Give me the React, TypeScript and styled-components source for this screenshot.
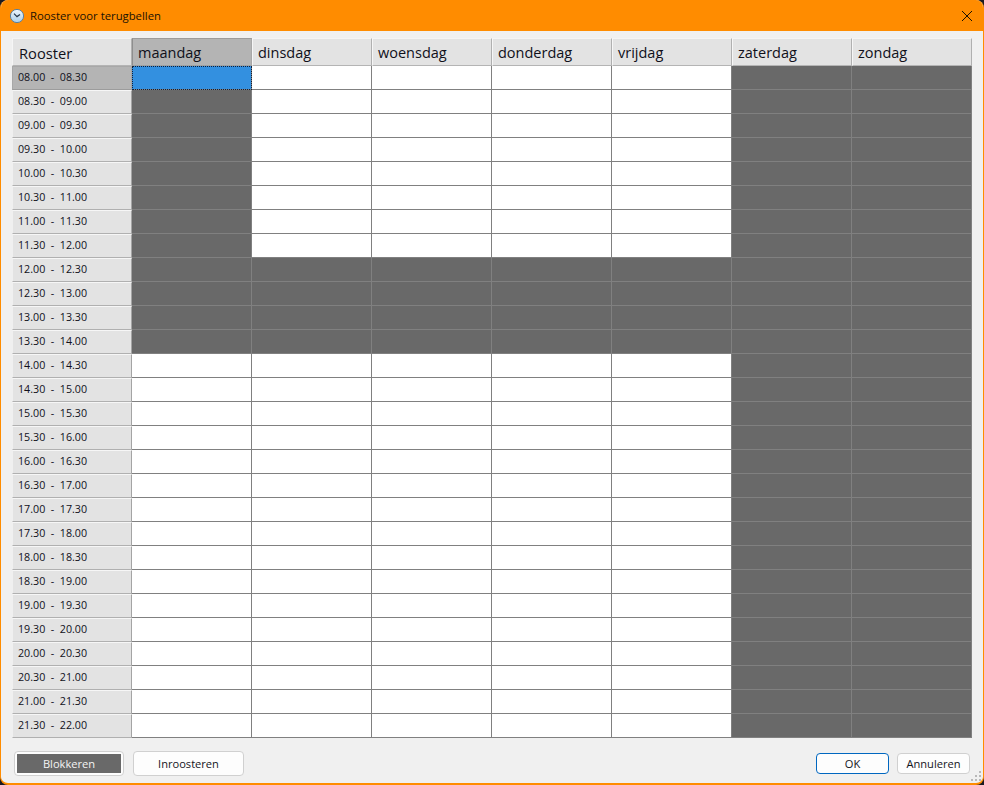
import React from 'react';
import styled, { createGlobalStyle } from "styled-components";

const GlobalStyle = createGlobalStyle`
    html, body {
        margin: 0;
        padding: 0;
        background: #1a1a22;
    }
    body {
        width: 984px;
        height: 785px;
        overflow: hidden;
        font-family: "Open Sans", "Noto Sans", sans-serif;
    }
`;

const Window = styled.div`
    position: relative;
    box-sizing: border-box;
    width: 984px;
    height: 785px;
    display: flex;
    flex-direction: column;
    background: #f0f0f0;
    border: solid 1px #ff8c00;
    border-top: none;
    border-bottom-width: 2px;
    border-radius: 8px;
    overflow: hidden;
`;

const TitleBar = styled.div`
    flex: none;
    height: 31px;
    display: flex;
    align-items: center;
    padding: 0 10px 0 8px;
    background: #ff8c00;
    color: #1a1204;
`;

const TitleText = styled.span`
    margin-left: 5px;
    font-size: 11.3px;
`;

const CloseButton = styled.button`
    margin-left: auto;
    width: 12px;
    height: 12px;
    padding: 0;
    border: none;
    background: transparent;
    display: flex;
`;

const Content = styled.div`
    flex: 1;
    display: flex;
    flex-direction: column;
    padding: 7px 11px 0 11px;
`;

const Grid = styled.div`
    display: grid;
    grid-template-columns: repeat(8, 120px);
    grid-template-rows: 28px repeat(28, 24px);
    width: 960px;
`;

const ColumnHeader = styled.div<{ $active?: boolean; $corner?: boolean }>`
    box-sizing: border-box;
    display: flex;
    align-items: center;
    padding-left: ${(p) => (p.$corner ? "6px" : "5px")};
    padding-top: ${(p) => (p.$corner ? "2px" : "1px")};
    font-size: ${(p) => (p.$corner ? "14.7px" : "14.5px")};
    color: #10101a;
    background: ${(p) => (p.$active ? "#b4b4b4" : "#e3e3e3")};
    border-top: solid 1px ${(p) => (p.$active ? "#9c9c9c" : "#f4f4f4")};
    border-left: solid 1px ${(p) => (p.$active ? "#8e8e8e" : "#f6f6f6")};
    border-right: solid 1px ${(p) => (p.$active ? "#a8a8a8" : "#b0b0b0")};
    border-bottom: solid 1px ${(p) => (p.$active ? "#a0a0a0" : "#b4b4b4")};
`;

const RowHeader = styled.div<{ $active?: boolean }>`
    box-sizing: border-box;
    display: flex;
    align-items: center;
    padding-left: 5px;
    padding-bottom: 2px;
    font-size: 10.7px;
    white-space: pre;
    color: #10101a;
    background: ${(p) => (p.$active ? "#b4b4b4" : "#e3e3e3")};
    border-top: solid 1px ${(p) => (p.$active ? "#a8a8a8" : "#f6f6f6")};
    border-left: solid 1px ${(p) => (p.$active ? "#a8a8a8" : "#f0f0f0")};
    border-right: solid 1px #a4a4a4;
    border-bottom: solid 1px ${(p) => (p.$active ? "#9c9c9c" : "#b0b0b0")};
`;

const Cell = styled.div<{ $blocked?: boolean; $selected?: boolean }>`
    box-sizing: border-box;
    background: ${(p) => (p.$selected ? "#3390e0" : p.$blocked ? "#696969" : "#ffffff")};
    border-right: solid 1px #808080;
    border-bottom: solid 1px #808080;
    ${(p) => p.$selected && "outline: dotted 1px #10203a; outline-offset: -1px;"}
`;

const Footer = styled.div`
    display: flex;
    align-items: center;
    gap: 9px;
    padding: 13px 2px 0 2px;
`;

const Spacer = styled.div`
    flex: 1;
`;

const Button = styled.button<{ $primary?: boolean }>`
    box-sizing: border-box;
    height: 25px;
    padding: 0;
    font-family: inherit;
    font-size: 11.1px;
    color: #14141c;
    background: #fdfdfd;
    border: solid 1px ${(p) => (p.$primary ? "#0067c0" : "#d0d0d0")};
    border-radius: 4px;
`;

const BlockButton = styled(Button)`
    width: 110px;
    padding: 2px;
    color: #f4f4f4;
`;

const BlockFill = styled.span`
    display: flex;
    align-items: center;
    justify-content: center;
    height: 100%;
    background: #696969;
`;

const PlanButton = styled(Button)`
    width: 111px;
`;

const OkButton = styled(Button)`
    width: 73px;
    height: 21px;
`;

const CancelButton = styled(Button)`
    width: 73px;
    height: 21px;
    margin-left: -1px;
`;

const Grip = styled.svg`
    position: absolute;
    right: 1px;
    bottom: 1px;
`;

const days = ["maandag", "dinsdag", "woensdag", "donderdag", "vrijdag", "zaterdag", "zondag"];

const fmt = (n: number) => {
    const h = String(Math.floor(n / 2)).padStart(2, "0");
    return `${h}.${n % 2 ? "30" : "00"}`;
};

// half hours from 08.00 to 22.00
const slots = Array.from({ length: 28 }, (_, i) => i + 16);

const isBlocked = (day: number, row: number) => {
    if (day >= 5) return true;
    if (row >= 8 && row < 12) return true;
    return day === 0 && row >= 1 && row < 8;
};

const ClockIcon = () => (
    <svg width="16" height="16" viewBox="0 0 16 16">
        <defs>
            <linearGradient id="clockFace" x1="0" y1="0" x2="0" y2="1">
                <stop offset="0" stopColor="#eef6fc" />
                <stop offset="1" stopColor="#a9cfea" />
            </linearGradient>
        </defs>
        <circle cx="8" cy="8" r="6.6" fill="url(#clockFace)" stroke="#5b7f9c" strokeWidth="1" />
        <path d="M5 5.6 L8 8.6 L11 6.4" fill="none" stroke="#27384a" strokeWidth="1.2" />
    </svg>
);

const CloseIcon = () => (
    <svg width="12" height="12" viewBox="0 0 12 12">
        <path d="M1 1 L11 11 M11 1 L1 11" stroke="#1a1204" strokeWidth="1" />
    </svg>
);

const App: React.FC = () => {
    return (
        <Window>
            <GlobalStyle />
            <TitleBar>
                <ClockIcon />
                <TitleText>Rooster voor terugbellen</TitleText>
                <CloseButton><CloseIcon /></CloseButton>
            </TitleBar>
            <Content>
                <Grid>
                    <ColumnHeader $corner>Rooster</ColumnHeader>
                    {days.map((d, i) => (
                        <ColumnHeader key={d} $active={i === 0}>{d}</ColumnHeader>
                    ))}
                    {slots.map((s, row) => (
                        <React.Fragment key={s}>
                            <RowHeader $active={row === 0}>{`${fmt(s)}  -  ${fmt(s + 1)}`}</RowHeader>
                            {days.map((d, day) => (
                                <Cell
                                    key={d}
                                    $blocked={isBlocked(day, row)}
                                    $selected={day === 0 && row === 0}
                                />
                            ))}
                        </React.Fragment>
                    ))}
                </Grid>
                <Footer>
                    <BlockButton><BlockFill>Blokkeren</BlockFill></BlockButton>
                    <PlanButton>Inroosteren</PlanButton>
                    <Spacer />
                    <OkButton $primary>OK</OkButton>
                    <CancelButton>Annuleren</CancelButton>
                </Footer>
            </Content>
            <Grip width="11" height="11" viewBox="0 0 11 11" fill="#b8b8b8">
                <rect x="8" y="0" width="2" height="2" />
                <rect x="4" y="4" width="2" height="2" />
                <rect x="8" y="4" width="2" height="2" />
                <rect x="0" y="8" width="2" height="2" />
                <rect x="4" y="8" width="2" height="2" />
                <rect x="8" y="8" width="2" height="2" />
            </Grip>
        </Window>
    );
}

export default App
